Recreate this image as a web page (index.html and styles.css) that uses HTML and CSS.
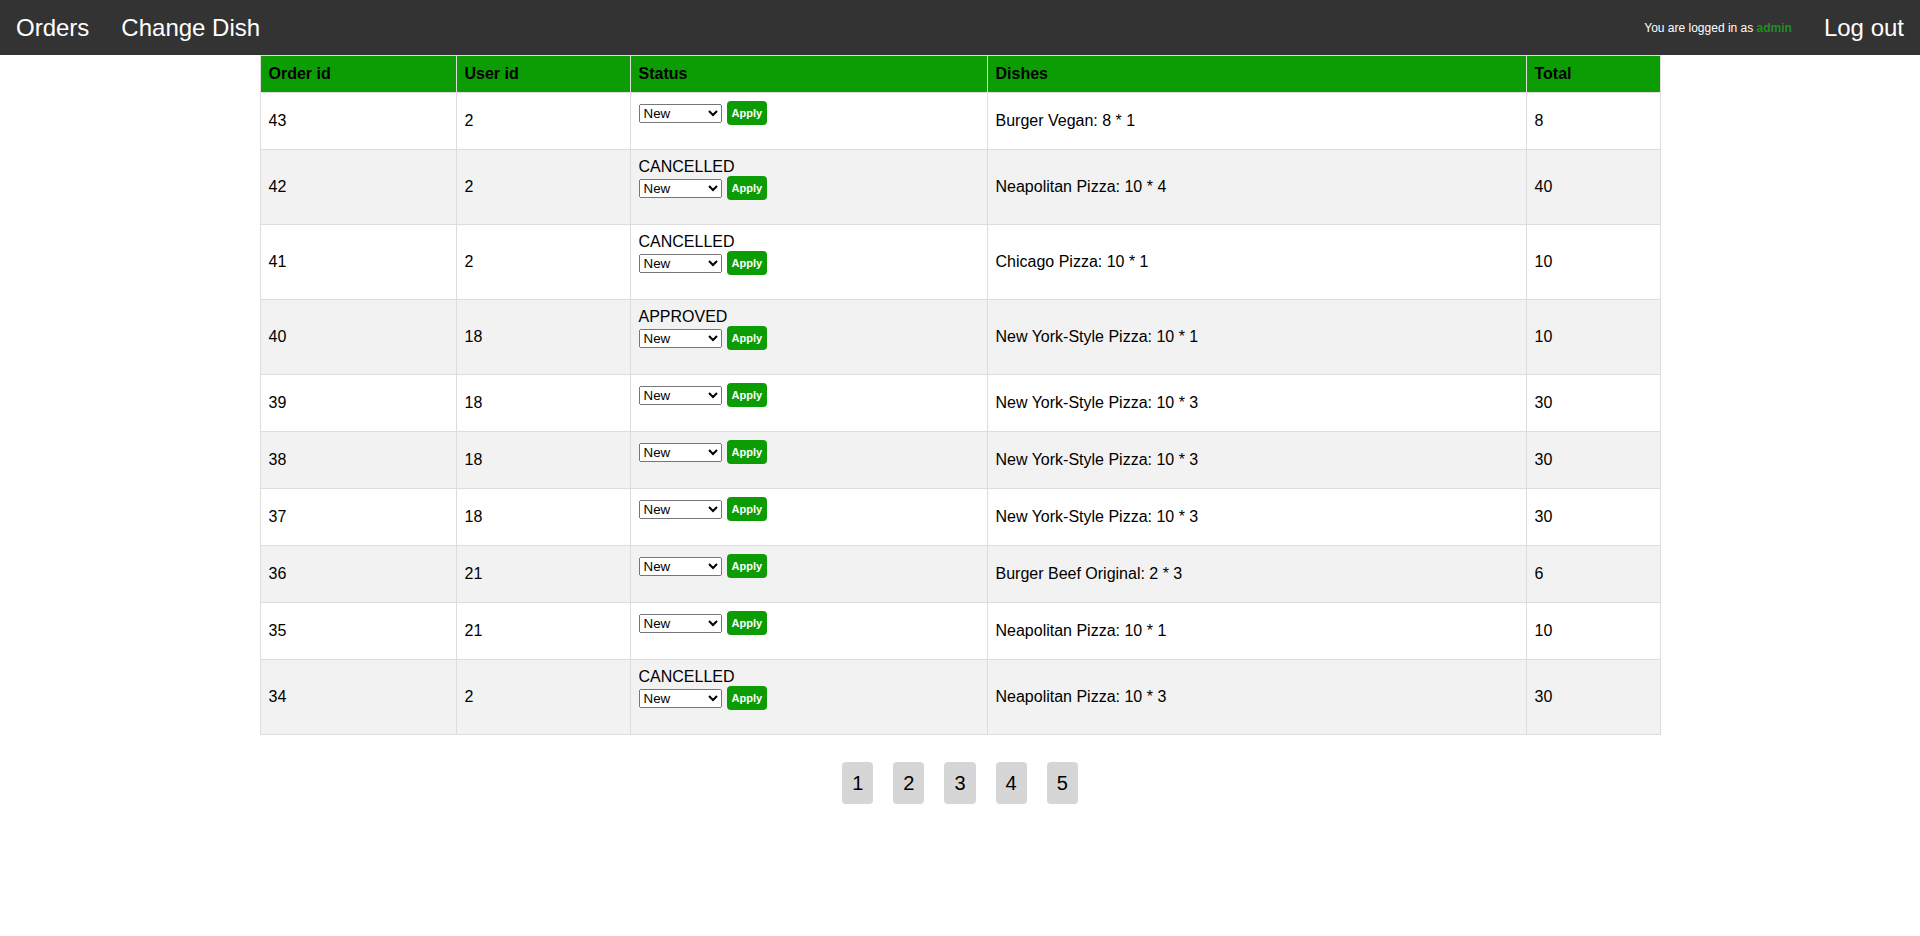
FILE: index.html
```html
<!DOCTYPE html>
<html>
<head>
<meta charset="utf-8">
<title>Orders</title>
<link rel="stylesheet" href="styles.css">
</head>
<body>
<nav class="topnav">
  <div class="nav-left">
    <a class="nav-link" href="#">Orders</a>
    <a class="nav-link" href="#">Change Dish</a>
  </div>
  <div class="nav-right">
    <span class="logged">You are logged in as <b class="user">admin</b></span>
    <a class="nav-link" href="#">Log out</a>
  </div>
</nav>

<table class="orders">
  <colgroup>
    <col class="c-id"><col class="c-user"><col class="c-status"><col class="c-dishes"><col class="c-total">
  </colgroup>
  <thead>
    <tr><th>Order id</th><th>User id</th><th>Status</th><th>Dishes</th><th>Total</th></tr>
  </thead>
  <tbody>
    <tr><td>43</td><td>2</td><td><form class="status-form"><select class="sel"><option>New</option><option>Approved</option><option>Cancelled</option></select><button class="apply" type="button">Apply</button></form></td><td>Burger Vegan: 8 * 1</td><td>8</td></tr>
    <tr><td>42</td><td>2</td><td><div class="status-text">CANCELLED</div><form class="status-form"><select class="sel"><option>New</option><option>Approved</option><option>Cancelled</option></select><button class="apply" type="button">Apply</button></form></td><td>Neapolitan Pizza: 10 * 4</td><td>40</td></tr>
    <tr><td>41</td><td>2</td><td><div class="status-text">CANCELLED</div><form class="status-form"><select class="sel"><option>New</option><option>Approved</option><option>Cancelled</option></select><button class="apply" type="button">Apply</button></form></td><td>Chicago Pizza: 10 * 1</td><td>10</td></tr>
    <tr><td>40</td><td>18</td><td><div class="status-text">APPROVED</div><form class="status-form"><select class="sel"><option>New</option><option>Approved</option><option>Cancelled</option></select><button class="apply" type="button">Apply</button></form></td><td>New York-Style Pizza: 10 * 1</td><td>10</td></tr>
    <tr><td>39</td><td>18</td><td><form class="status-form"><select class="sel"><option>New</option><option>Approved</option><option>Cancelled</option></select><button class="apply" type="button">Apply</button></form></td><td>New York-Style Pizza: 10 * 3</td><td>30</td></tr>
    <tr><td>38</td><td>18</td><td><form class="status-form"><select class="sel"><option>New</option><option>Approved</option><option>Cancelled</option></select><button class="apply" type="button">Apply</button></form></td><td>New York-Style Pizza: 10 * 3</td><td>30</td></tr>
    <tr><td>37</td><td>18</td><td><form class="status-form"><select class="sel"><option>New</option><option>Approved</option><option>Cancelled</option></select><button class="apply" type="button">Apply</button></form></td><td>New York-Style Pizza: 10 * 3</td><td>30</td></tr>
    <tr><td>36</td><td>21</td><td><form class="status-form"><select class="sel"><option>New</option><option>Approved</option><option>Cancelled</option></select><button class="apply" type="button">Apply</button></form></td><td>Burger Beef Original: 2 * 3</td><td>6</td></tr>
    <tr><td>35</td><td>21</td><td><form class="status-form"><select class="sel"><option>New</option><option>Approved</option><option>Cancelled</option></select><button class="apply" type="button">Apply</button></form></td><td>Neapolitan Pizza: 10 * 1</td><td>10</td></tr>
    <tr><td>34</td><td>2</td><td><div class="status-text">CANCELLED</div><form class="status-form"><select class="sel"><option>New</option><option>Approved</option><option>Cancelled</option></select><button class="apply" type="button">Apply</button></form></td><td>Neapolitan Pizza: 10 * 3</td><td>30</td></tr>
  </tbody>
</table>

<div class="pagination">
  <a class="page" href="#">1</a>
  <a class="page" href="#">2</a>
  <a class="page" href="#">3</a>
  <a class="page" href="#">4</a>
  <a class="page" href="#">5</a>
</div>
</body>
</html>
```
FILE: styles.css
```css
html, body {
  margin: 0;
  padding: 0;
  background: #ffffff;
  font-family: "Liberation Sans", Arial, sans-serif;
  color: #000;
}

.topnav {
  height: 55px;
  background: #333333;
  display: flex;
  align-items: center;
  justify-content: space-between;
}

.nav-left, .nav-right {
  display: flex;
  align-items: center;
}

.nav-link {
  color: #ffffff;
  text-decoration: none;
  font-size: 24px;
  padding: 0 16px;
}

.logged {
  color: #ffffff;
  font-size: 12px;
  padding: 0 16px;
}

.user {
  color: #228b22;
  font-weight: bold;
}

.orders {
  width: 1400px;
  margin: 0 auto;
  border-collapse: collapse;
  table-layout: fixed;
  font-size: 16px;
}

.c-id { width: 196px; }
.c-user { width: 174px; }
.c-status { width: 357px; }
.c-dishes { width: 539px; }
.c-total { width: 134px; }

.orders th,
.orders td {
  border: 1px solid #dddddd;
  padding: 8px;
  text-align: left;
}

.orders th {
  background: #0c9d04;
  color: #000;
  font-weight: bold;
  padding: 9px 8px;
}

.orders tbody tr:nth-child(even) {
  background: #f2f2f2;
}

.status-form {
  display: flex;
  align-items: center;
  gap: 5px;
  margin: 0 0 16px 0;
}

.sel {
  width: 83px;
  height: 19px;
  font-size: 13.33px;
  font-family: "Liberation Sans", Arial, sans-serif;
  margin: 0;
}

.apply {
  height: 24px;
  padding: 0 5px;
  border: none;
  border-radius: 4px;
  background: #0c9d04;
  color: #ffffff;
  font-size: 11px;
  font-weight: bold;
  font-family: "Liberation Sans", Arial, sans-serif;
  margin: 0;
}

.pagination {
  display: flex;
  justify-content: center;
  margin-top: 27px;
}

.page {
  display: block;
  background: #d6d6d6;
  color: #000;
  text-decoration: none;
  font-size: 20px;
  line-height: 22px;
  padding: 10px;
  border-radius: 4px;
  margin: 0 10px;
}
```
